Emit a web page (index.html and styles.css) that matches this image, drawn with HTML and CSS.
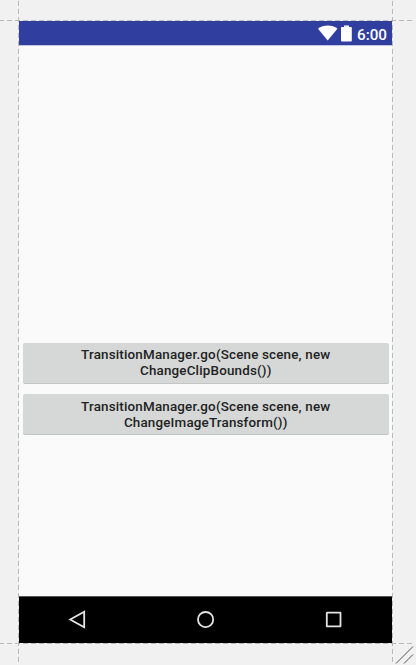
FILE: index.html
```html
<!DOCTYPE html>
<html lang="en">
<head>
<meta charset="utf-8">
<title>Layout preview</title>
<link rel="stylesheet" href="styles.css">
</head>
<body>
<main class="device">
  <header class="status">
    <svg class="wifi" width="20" height="16" viewBox="0 0 20 16"><path d="M0 3.8C5.4-.5 14-.5 19.4 3.8L9.7 15.6Z" fill="#fff"/></svg>
    <svg class="battery" width="11" height="17" viewBox="0 0 11 17"><path d="M3 .5h5v1.4h2q.8 0 .8 1V15.6q0 1-1 1H1q-1 0-1-1V2.9q0-1 1-1h2z" fill="#fff"/></svg>
    <span class="time">6:00</span>
  </header>
  <section class="content">
    <button class="btn btn-first">TransitionManager.go(Scene scene, new<br>ChangeClipBounds())</button>
    <button class="btn">TransitionManager.go(Scene scene, new<br>ChangeImageTransform())</button>
  </section>
  <nav class="nav">
    <svg width="20" height="20" viewBox="0 0 20 20"><path d="M17.2 1.8V17.2L3.2 9.5Z"/></svg>
    <svg width="20" height="20" viewBox="0 0 20 20"><circle cx="9.6" cy="9.6" r="7.6"/></svg>
    <svg width="20" height="20" viewBox="0 0 20 20"><rect x="2.8" y="2.7" width="13.7" height="13.7" rx=".3"/></svg>
  </nav>
</main>
<svg class="guides" width="416" height="665" viewBox="0 0 416 665">
  <g stroke="#b9b9b9" stroke-dasharray="5 3">
    <path d="M-1 20.5H413M-1 643.5H413M18.5 1V662M392.5 1V662"/>
  </g>
  <path d="M396 663.5L413 646.5M404 663.5L413 654.5" stroke="#555"/>
</svg>
</body>
</html>
```

FILE: styles.css
```css
body {
  margin: 0;
  width: 416px;
  height: 665px;
  overflow: hidden;
  background: #f1f1f1;
  font-family: Roboto, sans-serif;
}

.device {
  display: flex;
  flex-direction: column;
  width: 373px;
  height: 622px;
  margin: 21px 0 0 19px;
  background: #fafafa;
}

.status {
  display: flex;
  justify-content: flex-end;
  align-items: flex-start;
  box-sizing: border-box;
  height: 25px;
  padding: 4px 5px 0 0;
  background: #303f9f;
  border-bottom: 1px solid #c0c5e2;
  color: #fff;
}

.battery {
  margin: 0 5px 0 3px;
}

.time {
  font-size: 15.2px;
  font-weight: 500;
  line-height: 20px;
}

.content {
  display: flex;
  flex: 1;
  flex-direction: column;
  gap: 11px;
  padding: 297px 3px 0 3.5px;
}

.btn {
  box-sizing: border-box;
  height: 40px;
  padding: 1px 0 0;
  border: 0;
  border-radius: 2px;
  background: #d6d8d7;
  box-shadow: 0 1px 0 #c3c5c4;
  color: #212222;
  font: 500 13.4px/16px Roboto, sans-serif;
  letter-spacing: .18px;
}

.btn-first {
  padding: 0;
}

.nav {
  display: flex;
  align-items: center;
  justify-content: space-between;
  box-sizing: border-box;
  height: 47px;
  padding: 0 48px;
  border-top: 1px solid #555;
  background: #000;
}

.nav svg {
  fill: none;
  stroke: #e4e4e4;
  stroke-width: 1.8;
}

.guides {
  position: absolute;
  top: 0;
  left: 0;
  fill: none;
  pointer-events: none;
}
```
